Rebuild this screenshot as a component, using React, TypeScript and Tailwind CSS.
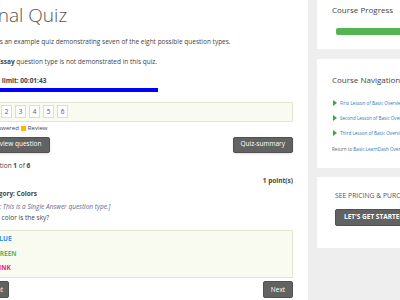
import { useState } from 'react';

const font = { fontFamily: '"Open Sans", "Liberation Sans", sans-serif' };

const answers = [
  { label: 'BLUE', color: 'text-[#2b8ef0]' },
  { label: 'GREEN', color: 'text-[#55bb55]' },
  { label: 'PINK', color: 'text-[#f5147f]' },
];

const lessons = ['First Lesson of Basic Overview', 'Second Lesson of Basic Overview', 'Third Lesson of Basic Overview'];

const QuizButton = ({ children }: { children: React.ReactNode }) => (
  <button className="h-[16px] px-[7px] bg-[#626262] border border-[#505050] rounded-[2px] text-white text-[6.5px] leading-none shadow-sm">
    {children}
  </button>
);

export default function App() {
  const [current] = useState(1);

  return (
    <div className="w-[400px] h-[300px] flex overflow-hidden bg-white text-[#444]" style={font}>
      {/* Quiz */}
      <div className="w-[308px] shrink-0 overflow-hidden">
        <div className="ml-[-16px] w-[309px]">
          <h1 className="text-[19px] font-light text-[#555] leading-none pt-[6px] h-[32px]">Final Quiz</h1>
          <p className="text-[6.5px] leading-none mt-[7px]">This is an example quiz demonstrating seven of the eight possible question types.</p>
          <p className="text-[6.5px] leading-none mt-[13px]">
            The <b>Essay</b> question type is not demonstrated in this quiz.
          </p>
          <p className="text-[6.5px] leading-none font-bold mt-[13px]">Time limit: 00:01:43</p>
          <div className="h-[4px] w-[174px] bg-[#0000ff] mt-[3px]" />

          {/* question list */}
          <div className="mt-[10px] h-[20px] border border-[#e1e7cf] bg-[#f9fbf1] flex items-center gap-[3px] px-[2px]">
            {[1, 2, 3, 4, 5, 6].map((n) => (
              <div
                key={n}
                className={`w-[11px] h-[13px] border border-[#dcdcdc] bg-white flex items-center justify-center text-[6.5px] ${
                  n === current ? 'text-[#444]' : 'text-[#555]'
                }`}
              >
                {n}
              </div>
            ))}
          </div>
          <div className="flex items-center text-[6px] leading-none mt-[3px] h-[7px]">
            <span className="w-[5px] h-[5px] bg-[#6cb5f0] mr-[2px]" />
            <span>Answered</span>
            <span className="w-[5px] h-[5px] bg-[#ffb800] mx-[2px]" />
            <span>Review</span>
          </div>

          <div className="flex justify-between mt-[5px]">
            <QuizButton>Review question</QuizButton>
            <QuizButton>Quiz-summary</QuizButton>
          </div>

          <p className="text-[6.5px] leading-none mt-[10px]">
            Question <b>1</b> of <b>6</b>
          </p>
          <p className="text-[6.5px] leading-none font-bold text-right mt-[9px]">1 point(s)</p>
          <p className="text-[6.5px] leading-none font-bold mt-[6px]">Category: Colors</p>
          <p className="text-[6.5px] leading-none italic text-[#5b6a9a] mt-[7px]">[Note: This is a Single Answer question type.]</p>
          <p className="text-[6.5px] leading-none mt-[4px]">What color is the sky?</p>

          {/* answers */}
          <div className="mt-[9px] h-[48px] border border-[#e1e7cf] bg-[#f9fbf1] flex flex-col justify-center gap-[8px] pl-[10px]">
            {answers.map((a) => (
              <div key={a.label} className={`text-[6.5px] leading-none font-bold ${a.color}`}>
                {a.label}
              </div>
            ))}
          </div>

          <div className="flex justify-between mt-[3px]">
            <button className="h-[17px] w-[25px] bg-[#626262] border border-[#505050] rounded-[2px] text-white text-[6.5px] text-right pr-[5px]">Hint</button>
            <button className="h-[17px] w-[30px] bg-[#626262] border border-[#505050] rounded-[2px] text-white text-[6.5px]">Next</button>
          </div>
        </div>
      </div>

      {/* Sidebar */}
      <div className="flex-1 bg-[#eeeeee] pl-[9px] flex flex-col">
        <div className="bg-white h-[49px] pl-[15px] pt-[5px] shrink-0">
          <h3 className="text-[8px] leading-[10px] text-[#444] whitespace-nowrap">Course Progress</h3>
          <div className="mt-[13px] ml-[4px] h-[7px] w-[120px] bg-[#52b552] rounded-l-[2px]" />
        </div>

        <div className="bg-white mt-[10px] h-[109px] pl-[15px] pt-[16px] shrink-0">
          <h3 className="text-[8px] leading-[10px] text-[#444] whitespace-nowrap">Course Navigation</h3>
          <ul className="mt-[15px] flex flex-col gap-[9px]">
            {lessons.map((l) => (
              <li key={l} className="flex items-center whitespace-nowrap text-[4.6px] leading-[5px] text-[#2b7bc0]">
                <span className="w-0 h-0 border-y-[3px] border-y-transparent border-l-[4px] border-l-[#3aa83a] ml-[1px] mr-[3px]" />
                {l}
              </li>
            ))}
          </ul>
          <p className="mt-[11px] text-[4.6px] leading-[5px] whitespace-nowrap text-[#666]">
            Return to <span className="text-[#2b7bc0]">Basic LearnDash Overview</span>
          </p>
        </div>

        <div className="bg-white mt-[9px] h-[71px] pl-[18px] pt-[16px] shrink-0">
          <p className="text-[6.8px] leading-none text-[#555] whitespace-nowrap">SEE PRICING &amp; PURCHASE</p>
          <button className="mt-[9px] h-[17px] w-[110px] bg-[#626262] border border-[#505050] rounded-[2px] text-white text-[6.5px] font-bold text-left pl-[8px] whitespace-nowrap">
            LET'S GET STARTED
          </button>
        </div>
      </div>
    </div>
  );
}
